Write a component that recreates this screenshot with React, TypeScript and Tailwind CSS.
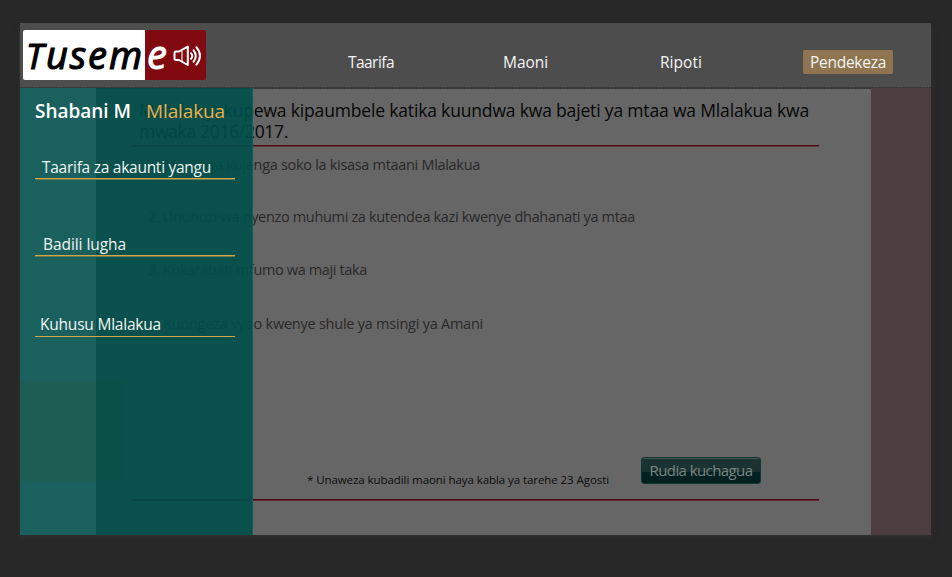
import { useLayoutEffect, useRef, useState } from "react";

type FitProps = { text: string; width: number; className?: string };

// Single line of text whose tracking is adjusted to fill the given width.
function Fit({ text, width, className = "" }: FitProps) {
  const ref = useRef<HTMLSpanElement>(null);
  const [tracking, setTracking] = useState(0);
  useLayoutEffect(() => {
    if (!ref.current) return;
    const natural = ref.current.getBoundingClientRect().width;
    setTracking((t) => t + (width - natural) / text.length);
  }, [text, width]);
  return (
    <span
      ref={ref}
      className={`inline-block whitespace-pre ${className}`}
      style={{ letterSpacing: `${tracking}px` }}
    >
      {text}
    </span>
  );
}

function Logo() {
  return (
    <div className="ml-[3px] mt-[7px] flex h-[50px] w-[183px] shrink-0 overflow-hidden rounded-[2px] font-['Open_Sans',sans-serif] text-[38px] font-medium italic leading-[48px]">
      <div className="flex w-[122px] items-baseline bg-white pl-[3px] text-black [-webkit-text-stroke:1.2px_black]">
        <span className="w-[20px] text-[35px]">T</span>
        <Fit text="usem" width={98} />
      </div>
      <div className="flex flex-1 bg-[#810a11] pl-[2px] text-white">
        <span className="w-[26px] text-[40px] [-webkit-text-stroke:1px_white]">e</span>
        <svg className="mt-[15px]" width="29" height="22" viewBox="0 0 29 22" fill="none" stroke="white" strokeWidth="2" strokeLinecap="round" strokeLinejoin="round">
          <path d="M6 6.5 L14.8 1.6 V20 L6 15 H3 Q1.5 15 1.5 13 V8.5 Q1.5 6.5 3 6.5 Z" />
          <path d="M9 6 V15.5" strokeWidth="1.1" />
          <path d="M18 8.2 Q20.5 11 18 13.8" />
          <path d="M20.5 5.2 Q25 11 20.5 16.8" />
          <path d="M23.4 2.2 Q30.5 11 23.4 19.6" />
        </svg>
      </div>
    </div>
  );
}

function Header() {
  return (
    <header className="h-[65px] bg-[#4d4d4d] text-[15.5px] leading-5 text-[#f4f4f4]">
      <div className="flex h-[64px]">
        <Logo />
        <nav className="flex pt-[29px]">
          <div className="ml-[142px] w-[155px]"><Fit text="Taarifa" width={46} /></div>
          <div className="w-[157px]"><Fit text="Maoni" width={45} /></div>
          <div className="w-[144px]"><Fit text="Ripoti" width={42} /></div>
        </nav>
        <button className="mt-[27px] -ml-px h-[24px] w-[90px] rounded-[2px] bg-[#8e744f] text-center leading-[22px]">
          <Fit text="Pendekeza" width={76} />
        </button>
      </div>
      <div className="h-[2px] bg-[repeating-linear-gradient(90deg,#343434_0_2px,#464646_2px_3px)]" />
    </header>
  );
}

function Content() {
  return (
    <main className="flex h-[447px] w-[851px] flex-col pl-[112px] pt-[12px] text-[#292929]">
      <div className="h-[44px] pl-[7px] text-[17.5px] leading-[21px] text-[#070707]">
        <div><Fit text="Mambo yakupewa kipaumbele katika kuundwa kwa bajeti ya mtaa wa Mlalakua kwa" width={670} /></div>
        <div><Fit text="mwaka 2016/2017." width={149} /></div>
      </div>
      <div className="mt-px h-[2px] w-[687px] border-b border-[#5d353a] bg-[#4f0913]" />
      <div className="flex h-[310px] flex-col pl-[16px] pt-[8px] text-[14.5px] leading-[20px]">
        <div className="h-[52px]"><Fit text="1. Mradi wa kujenga soko la kisasa mtaani Mlalakua" width={332} /></div>
        <div className="h-[53px]"><Fit text="2. Ununuzi wa nyenzo muhumi za kutendea kazi kwenye dhahanati ya mtaa" width={487} /></div>
        <div className="h-[54px]"><Fit text="3. Kukarabati mfumo wa maji taka" width={219} /></div>
        <div><Fit text="4. Kuongeza vyoo kwenye shule ya msingi ya Amani" width={335} /></div>
      </div>
      <div className="flex h-[42px] pl-[175px]">
        <div className="w-[334px] pt-[15px] text-[11.5px] leading-[16px] text-[#0c0c0c]">
          <Fit text="* Unaweza kubadili maoni haya kabla ya tarehe 23 Agosti" width={302} />
        </div>
        <button className="h-[27px] w-[120px] rounded-[3px] border border-[#0d3835] bg-[linear-gradient(#455555_0_1px,#1b3534_1px,#1a3130_55%,#02201f_55%)] text-center text-[15px] leading-[23px] text-[#7b8584]">
          <Fit text="Rudia kuchagua" width={103} />
        </button>
      </div>
      <div className="h-[2px] w-[687px] border-b border-[#59252c] bg-[#4f0913]" />
    </main>
  );
}

type EntryProps = { text: string; width: number; className: string };

function Entry({ text, width, className }: EntryProps) {
  return (
    <div className={`w-[200px] border-b border-[#d4a548] text-[15.5px] leading-5 text-[#f0f5f4] ${className}`}>
      <Fit text={text} width={width} />
    </div>
  );
}

function Sidebar() {
  return (
    <aside className="absolute left-0 top-[65px] h-[447px] w-[233px] bg-[#004f4a]/90">
      <div className="absolute inset-y-0 right-0 w-px bg-[#0a625b]" />
      <div className="absolute inset-y-0 left-0 w-[76px] bg-[#1a605c]" />
      <div className="absolute left-0 top-[293px] h-[100px] w-[76px] bg-[#1c5e53]" />
      <div className="absolute left-[76px] top-[293px] h-[100px] w-[26px] bg-[#0b4f49]" />
      <div className="relative flex flex-col pl-[15px] pt-[11px]">
        <div className="flex h-[57px] text-[19px] leading-6">
          <div className="w-[111px] font-semibold text-white"><Fit text="Shabani M" width={96} /></div>
          <div className="text-[#ebb04b]"><Fit text="Mlalakua" width={79} /></div>
        </div>
        <Entry text="Taarifa za akaunti yangu" width={169} className="h-[23px] pl-[7px] pt-[1px] shadow-[0_1px_0_#6b7a49]" />
        <Entry text="Badili lugha" width={83} className="mt-[53px] h-[24px] pl-[8px] pt-[2px] shadow-[0_1px_0_#6b7a49]" />
        <Entry text="Kuhusu Mlalakua" width={121} className="mt-[57px] h-[24px] pl-[5px] pt-px" />
      </div>
    </aside>
  );
}

export default function App() {
  return (
    <div className="h-[577px] w-[952px] overflow-hidden bg-[#282828] pl-[20px] pt-[23px] font-['Open_Sans','Noto_Sans',sans-serif]">
      <div className="relative h-[512px] w-[911px] bg-[#666666] shadow-[0_3px_5px_#3a3a3a80]">
        <Header />
        <div className="flex">
          <Content />
          <div className="h-[447px] w-[60px] bg-[#4d3d3e]" />
        </div>
        <Sidebar />
      </div>
    </div>
  );
}
